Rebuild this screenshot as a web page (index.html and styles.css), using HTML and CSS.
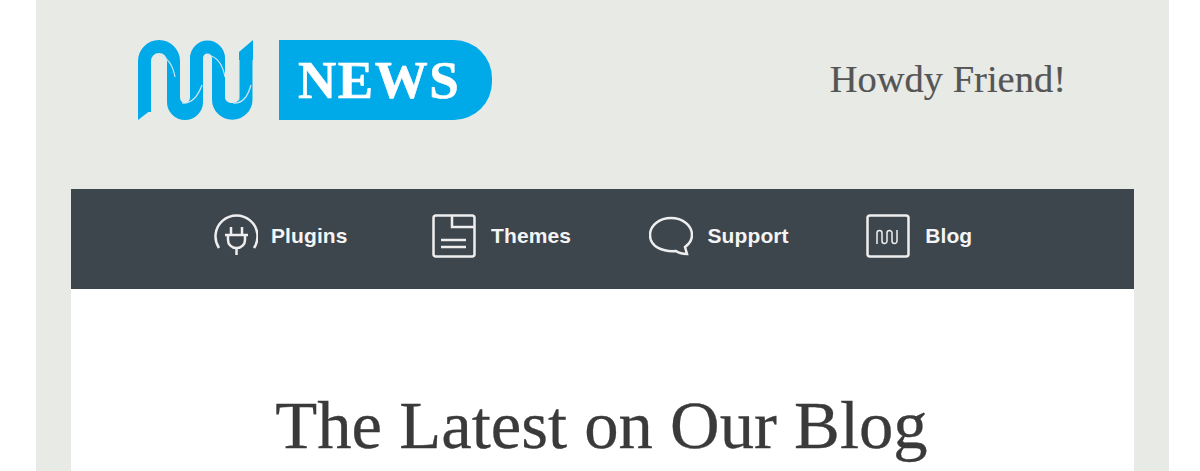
FILE: index.html
```html
<!DOCTYPE html>
<html lang="en">
<head>
<meta charset="utf-8">
<title>News</title>
<link rel="stylesheet" href="styles.css">
</head>
<body>
<div class="page">
  <header class="masthead">
    <div class="brand">
      <svg class="logo-mark" width="115" height="80" viewBox="0 0 115 80" aria-hidden="true">
        <path class="ribbon" d="M6.500 72V21A14.500 14.500 0 0 1 35.500 21V62A11.500 11.500 0 0 0 58.500 62V18A11 11 0 0 1 80.500 18V59.500A13.750 13.750 0 0 0 108 59.500V12"/>
        <polygon class="ribbon-end" points="0,80 13,70 13,60 0,60"/>
        <polygon class="ribbon-end" points="115,0 101,12 101,20 115,20"/>
        <path class="ribbon-end" d="M42 57C42 65 52 65 52 57V70H42ZM87 57C87 65 101.500 65 101.500 57V70H87Z"/>
        <path class="sheen" d="M20 15C30 17 35 26 37 37M44 63C54 64 60 56 64 45M70 15C80 17 85 26 87 37M95 63C104 64 110 56 113 45"/>
      </svg>
      <div class="badge">NEWS</div>
    </div>
    <p class="greeting">Howdy Friend!</p>
  </header>
  <nav class="nav">
    <a class="nav-item nav-item-first">
      <svg class="nav-icon" viewBox="0 0 44 44" aria-hidden="true">
        <path d="M5 34A21 21 0 1 1 40 34"/>
        <path d="M17 13V21M28 13V21M11 21H34M14 21V26A8 8 0 0 0 22 34H23A8 8 0 0 0 31 26V21M22.500 34V41"/>
      </svg>
      <span>Plugins</span>
    </a>
    <a class="nav-item">
      <svg class="nav-icon" viewBox="0 0 44 44" aria-hidden="true">
        <rect x="1.500" y="1.500" width="41" height="41" rx="2.500"/>
        <path d="M20 1.500V13H42.500M9 26H34M9 33H34"/>
      </svg>
      <span>Themes</span>
    </a>
    <a class="nav-item">
      <svg class="nav-icon" viewBox="0 0 44 44" aria-hidden="true">
        <path d="M22 4C33 4 43 11 43 21C43 27 40 30 36 33L38 40C34 40 30 39 27 37C14 38 1 33 1 21C1 11 11 4 22 4Z"/>
      </svg>
      <span>Support</span>
    </a>
    <a class="nav-item">
      <svg class="nav-icon" viewBox="0 0 44 44" aria-hidden="true">
        <rect x="1.500" y="1.500" width="41" height="41" rx="2.500"/>
        <path class="fine" d="M11 30V19A2.500 2.500 0 0 1 16 19V27A2.500 2.500 0 0 0 21 27V19A2.500 2.500 0 0 1 26 19V27A2.500 2.500 0 0 0 31 27V16"/>
      </svg>
      <span>Blog</span>
    </a>
  </nav>
  <main class="content">
    <h1 class="title">The Latest on Our Blog</h1>
  </main>
</div>
</body>
</html>
```
FILE: styles.css
```css
* { box-sizing: border-box; }
html, body { margin: 0; padding: 0; height: 100%; background: #fff; overflow: hidden; }
.page {
  width: 1133px;
  height: 471px;
  margin-left: 36px;
  padding: 0 35px;
  background: #e8eae6;
  display: flex;
  flex-direction: column;
}
.masthead {
  height: 189px;
  flex: none;
  display: flex;
  justify-content: space-between;
  align-items: flex-start;
  padding: 40px 68px 0 67px;
}
.brand { display: flex; gap: 26px; }
.logo-mark { display: block; }
.ribbon { fill: none; stroke: #00a9e8; stroke-width: 13; }
.ribbon-end { fill: #00a9e8; }
.sheen { fill: none; stroke: #cfe9f4; stroke-width: 1.200; }
.badge {
  width: 213px;
  height: 80px;
  background: #00a9e8;
  border-radius: 0 38px 38px 0;
  color: #fff;
  font: bold 53px/80px "Liberation Serif", serif;
  letter-spacing: 1.500px;
  padding-left: 19px;
  -webkit-text-stroke: 0.600px #fff;
}
.greeting {
  margin: 17px 0 0;
  font: 38.500px/44px "Liberation Serif", serif;
  color: #555;
  -webkit-text-stroke: 0.200px #555;
}
.nav {
  height: 100px;
  flex: none;
  background: #3d454d;
  display: flex;
  align-items: center;
  gap: 77.500px;
  padding: 0 0 6px 143px;
}
.nav-item {
  display: flex;
  align-items: center;
  gap: 15px;
  color: #f4f4f4;
  font: bold 21px/26px "Liberation Sans", sans-serif;
  letter-spacing: 0.100px;
}
.nav-item-first { margin-right: 7px; gap: 13px; }
.nav-icon { display: block; width: 44px; height: 44px; fill: none; stroke: #eee; stroke-width: 2.500; }
.nav-icon .fine { stroke-width: 1.500; }
.content { flex: 1; background: #fff; text-align: center; padding-right: 2px; }
.title {
  margin: 98px 0 0;
  font: normal 68.700px/76px "Liberation Serif", serif;
  color: #3a3a3a;
  -webkit-text-stroke: 0.300px #3a3a3a;
}
```
